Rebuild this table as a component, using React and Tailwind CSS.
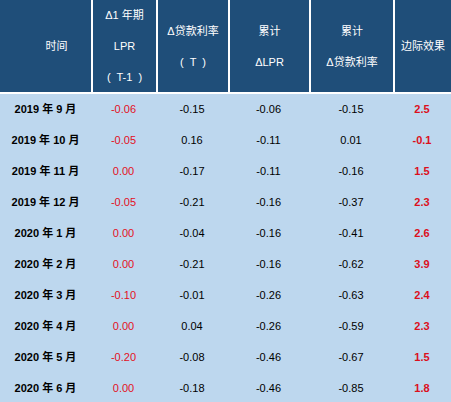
const rows = [
  ['2019 年 9 月', '-0.06', '-0.15', '-0.06', '-0.15', '2.5'],
  ['2019 年 10 月', '-0.05', '0.16', '-0.11', '0.01', '-0.1'],
  ['2019 年 11 月', '0.00', '-0.17', '-0.11', '-0.16', '1.5'],
  ['2019 年 12 月', '-0.05', '-0.21', '-0.16', '-0.37', '2.3'],
  ['2020 年 1 月', '0.00', '-0.04', '-0.16', '-0.41', '2.6'],
  ['2020 年 2 月', '0.00', '-0.21', '-0.16', '-0.62', '3.9'],
  ['2020 年 3 月', '-0.10', '-0.01', '-0.26', '-0.63', '2.4'],
  ['2020 年 4 月', '0.00', '0.04', '-0.26', '-0.59', '2.3'],
  ['2020 年 5 月', '-0.20', '-0.08', '-0.46', '-0.67', '1.5'],
  ['2020 年 6 月', '0.00', '-0.18', '-0.46', '-0.85', '1.8'],
]

const cols = 'grid grid-cols-[91px_65px_72px_81px_84px_1fr]'

function HeadCell({ lines, first, className = '' }) {
  return (
    <div className={`flex flex-col items-center justify-center leading-[31px] ${first ? '' : 'border-l-[2px] border-white'} ${className}`}>
      {lines.map((l, i) => (
        <span key={i} className="whitespace-pre">{l}</span>
      ))}
    </div>
  )
}

export default function App() {
  return (
    <div className="w-[451px] h-[402px] overflow-hidden bg-[#bdd7ee] font-['Liberation_Sans','Noto_Sans_CJK_SC',sans-serif] text-[11px]">
      <div className={`${cols} h-[94px] bg-[#1f4e79] text-white border-b-[2px] border-white`}>
        <HeadCell first lines={['时间']} className="pl-[22px]" />
        <HeadCell lines={['Δ1 年期', 'LPR', '(  T-1  )']} />
        <HeadCell lines={['Δ贷款利率', '(  T  )']} />
        <HeadCell lines={['累计', 'ΔLPR']} />
        <HeadCell lines={['累计', 'Δ贷款利率']} />
        <HeadCell lines={['边际效果']} />
      </div>
      {rows.map((r) => (
        <div key={r[0]} className={`${cols} h-[31px] items-center text-center text-black`}>
          <div className="font-bold">{r[0]}</div>
          <div className="text-[#e3101e]">{r[1]}</div>
          <div>{r[2]}</div>
          <div>{r[3]}</div>
          <div>{r[4]}</div>
          <div className="font-bold text-[#dc0f1c]">{r[5]}</div>
        </div>
      ))}
    </div>
  )
}
